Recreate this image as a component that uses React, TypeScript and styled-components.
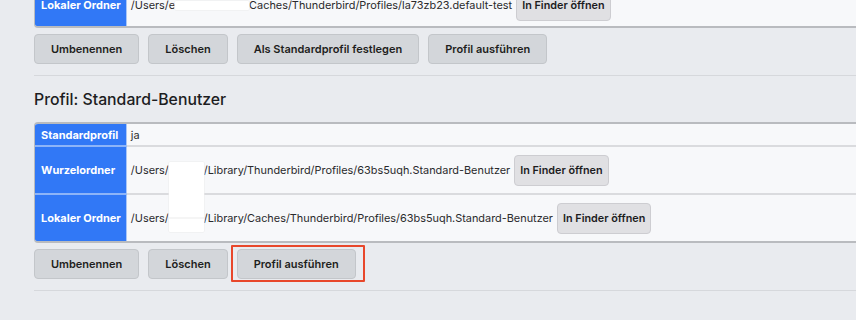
import React from 'react';
import styled, { createGlobalStyle } from 'styled-components';

const GlobalStyle = createGlobalStyle`
  html, body {
    margin: 0;
    padding: 0;
    background: #e9ebef;
    overflow: hidden;
  }
  body {
    font-family: Inter, "Noto Sans", "Liberation Sans", sans-serif;
    color: #1d1d1f;
  }
`;

const Page = styled.div`
  width: 960px;
  padding-left: 34px;
  margin-top: -16px;
`;

const ProfileSection = styled.section`
  padding-bottom: 11px;
  border-bottom: 1.5px solid #d6d8dc;
`;

const Heading = styled.h2`
  margin: 13px 0 11px;
  font-size: 15.8px;
  line-height: 22px;
  font-weight: 500;
  color: #1d1d1f;
`;

const TableFrame = styled.div<{ $cut?: boolean }>`
  border: 1px solid #b9bbbf;
  border-top-width: ${({ $cut }) => ($cut ? '0' : '2px')};
  border-bottom-width: 2px;
  border-radius: 4px;
  overflow: hidden;
  background: #f7f8fa;
`;

const Table = styled.table`
  width: 100%;
  border-collapse: separate;
  border-spacing: 0;
`;

const HeaderCell = styled.th<{ $last?: boolean }>`
  width: 79px;
  padding: 0 5px 0 6px;
  background: #3178f6;
  color: #ffffff;
  font-size: 11px;
  font-weight: 700;
  text-align: left;
  white-space: nowrap;
  border-right: 1.5px solid #a9c6f7;
  border-bottom: ${({ $last }) => ($last ? '0' : '2px solid #8db4f8')};
`;

const ValueCell = styled.td<{ $last?: boolean; $height: number }>`
  height: ${({ $height }) => $height}px;
  padding: 0 4px;
  font-size: 10.9px;
  color: #2a2a2c;
  white-space: nowrap;
  border-bottom: ${({ $last }) => ($last ? '0' : '2px solid #dadbde')};
`;

const PathLine = styled.div`
  display: flex;
  align-items: center;
  gap: 4px;
`;

const PathText = styled.span`
  display: inline-flex;
  align-items: center;
`;

const Redaction = styled.span<{ $width: number; $up: number; $down: number }>`
  position: relative;
  display: inline-block;
  width: ${({ $width }) => $width}px;
  height: 13px;

  &::after {
    content: '';
    position: absolute;
    left: 0;
    right: 0;
    top: ${({ $up }) => 6.5 - $up}px;
    height: ${({ $up, $down }) => $up + $down}px;
    background: #ffffff;
    border-radius: 1px;
    box-shadow: 0 0 0 0.5px #ececec;
    z-index: 2;
  }
`;

const FinderButton = styled.button`
  height: 31px;
  padding: 0 5px;
  background: #e0e0e3;
  border: 1px solid #cdcdd1;
  border-radius: 4px;
  font-family: inherit;
  font-size: 10.8px;
  font-weight: 600;
  color: #1c1c1e;
  white-space: nowrap;
`;

const ButtonRow = styled.div`
  display: flex;
  gap: 9px;
  margin-top: 6px;
`;

const ActionButton = styled.button<{ $highlighted?: boolean }>`
  position: relative;
  height: 30px;
  padding: 0 16px;
  background: #d3d6da;
  border: 1px solid #c3c6ca;
  border-radius: 4px;
  font-family: inherit;
  font-size: 11px;
  font-weight: 600;
  color: #1e1e20;
  white-space: nowrap;

  &::after {
    content: '';
    display: ${({ $highlighted }) => ($highlighted ? 'block' : 'none')};
    position: absolute;
    top: -5px;
    bottom: -4px;
    left: -7px;
    right: -10px;
    border: 2.5px solid #e8472b;
    border-radius: 1px;
  }
`;

type Row = {
  label: string;
  content: React.ReactNode;
  height?: number;
};

const ProfileTable: React.FC<{ rows: Row[]; cut?: boolean }> = ({ rows, cut }) => (
  <TableFrame $cut={cut}>
    <Table>
      <tbody>
        {rows.map((row, i) => {
          const last = i === rows.length - 1;
          return (
            <tr key={row.label}>
              <HeaderCell $last={last}>{row.label}</HeaderCell>
              <ValueCell $last={last} $height={row.height ?? 46}>
                {row.content}
              </ValueCell>
            </tr>
          );
        })}
      </tbody>
    </Table>
  </TableFrame>
);

const PathWithButton: React.FC<{ children: React.ReactNode }> = ({ children }) => (
  <PathLine>
    <PathText>{children}</PathText>
    <FinderButton>In Finder öffnen</FinderButton>
  </PathLine>
);

export default function App() {
  return (
    <>
      <GlobalStyle />
      <Page>
        <ProfileSection>
          <ProfileTable
            cut
            rows={[
              {
                label: 'Lokaler Ordner',
                height: 42,
                content: (
                  <PathWithButton>
                    /Users/e
                    <Redaction $width={74} $up={4} $down={5} />
                    Caches/Thunderbird/Profiles/la73zb23.default-test
                  </PathWithButton>
                ),
              },
            ]}
          />
          <ButtonRow>
            <ActionButton>Umbenennen</ActionButton>
            <ActionButton>Löschen</ActionButton>
            <ActionButton>Als Standardprofil festlegen</ActionButton>
            <ActionButton>Profil ausführen</ActionButton>
          </ButtonRow>
        </ProfileSection>

        <ProfileSection>
          <Heading>Profil: Standard-Benutzer</Heading>
          <ProfileTable
            rows={[
              { label: 'Standardprofil', content: 'ja', height: 21 },
              {
                label: 'Wurzelordner',
                content: (
                  <PathWithButton>
                    /Users/
                    <Redaction $width={35} $up={8} $down={62} />
                    /Library/Thunderbird/Profiles/63bs5uqh.Standard-Benutzer
                  </PathWithButton>
                ),
              },
              {
                label: 'Lokaler Ordner',
                content: (
                  <PathWithButton>
                    /Users/
                    <Redaction $width={35} $up={0} $down={0} />
                    /Library/Caches/Thunderbird/Profiles/63bs5uqh.Standard-Benutzer
                  </PathWithButton>
                ),
              },
            ]}
          />
          <ButtonRow>
            <ActionButton>Umbenennen</ActionButton>
            <ActionButton>Löschen</ActionButton>
            <ActionButton $highlighted>Profil ausführen</ActionButton>
          </ButtonRow>
        </ProfileSection>
      </Page>
    </>
  );
}
